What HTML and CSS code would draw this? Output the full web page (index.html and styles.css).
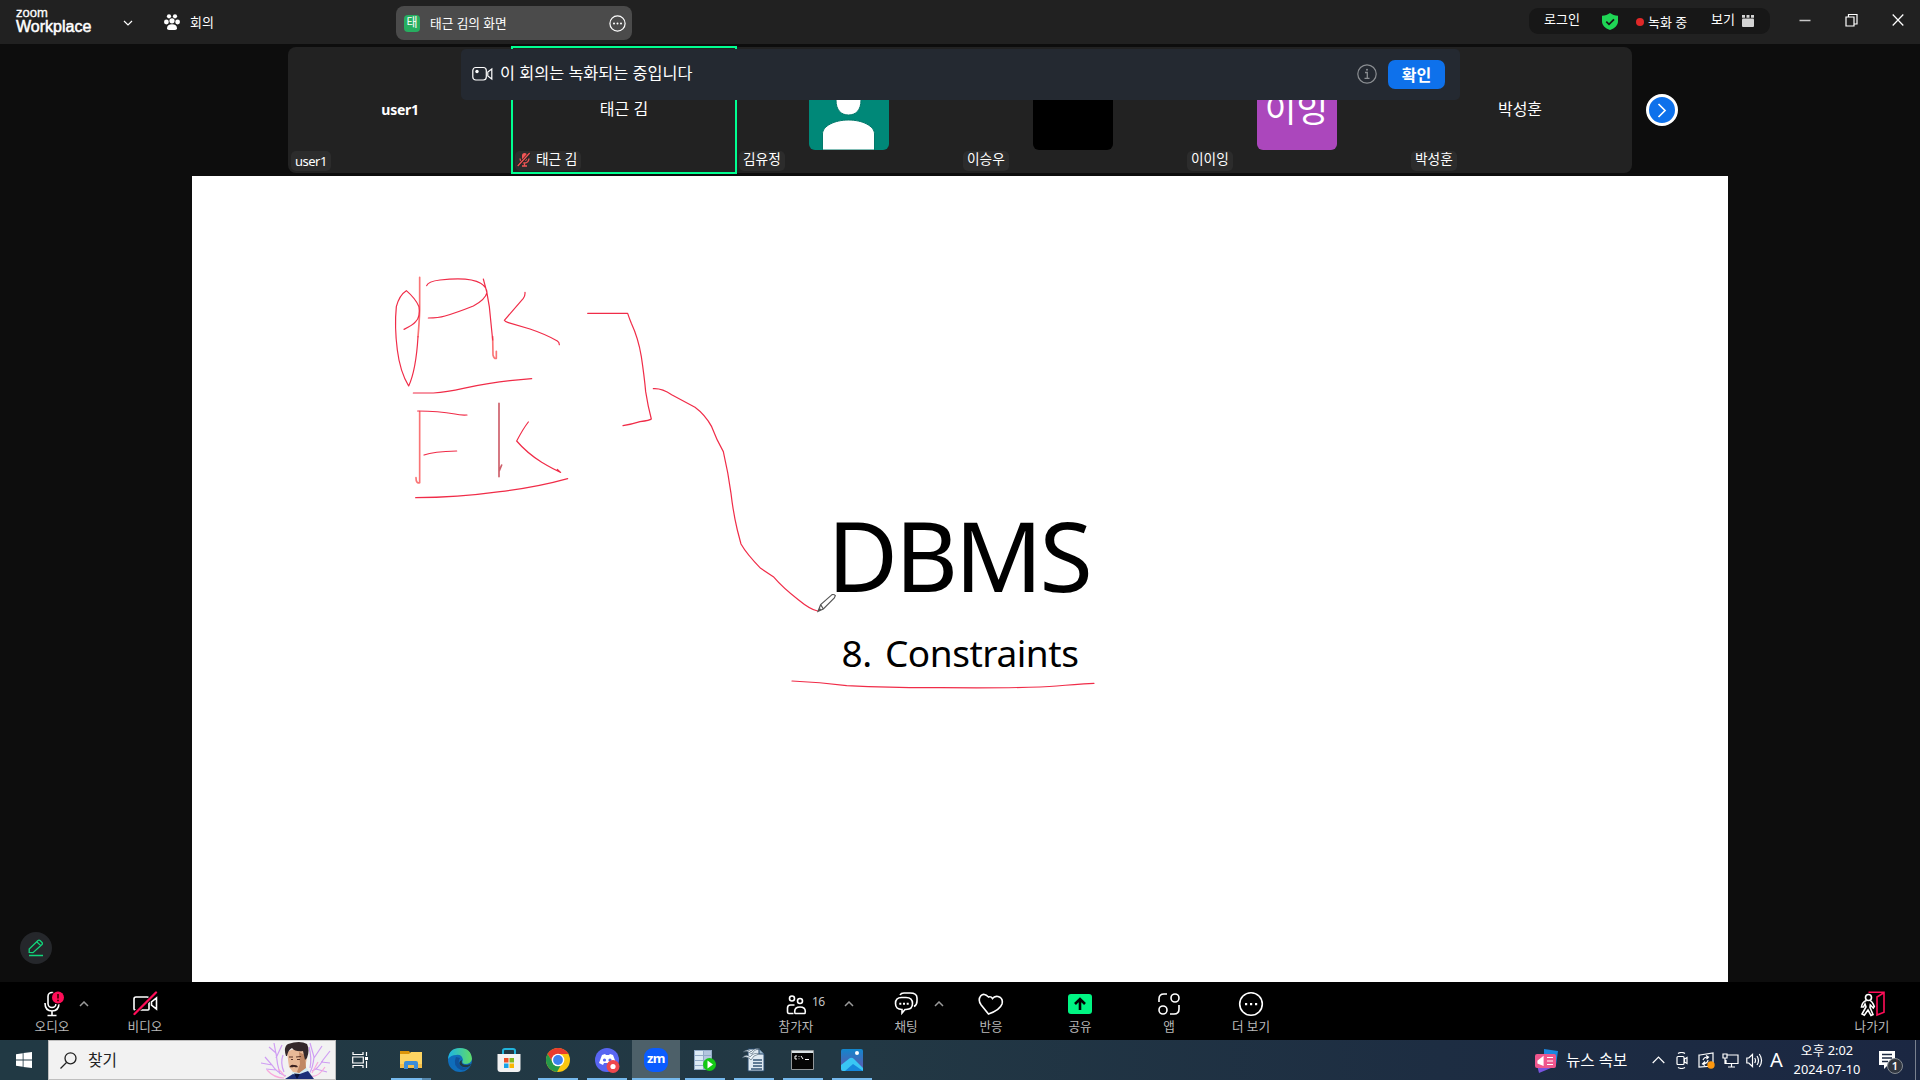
FILE: index.html
```
<!DOCTYPE html>
<html lang="ko">
<head>
<meta charset="utf-8">
<title>Zoom Workplace</title>
<link rel="stylesheet" href="styles.css">
</head>
<body>
<div class="screen">
  <header class="topbar">
    <div class="brand"><span class="brand-zoom">zoom</span><span class="brand-work">Workplace</span></div>
    <svg class="brand-caret" width="10" height="6" viewBox="0 0 10 6"><path d="M1 1l4 4 4-4" class="ln"/></svg>
    <svg class="meet-icon" width="16" height="16" viewBox="0 0 16 16" fill="#fff"><circle cx="5" cy="2.3" r="2.1"/><circle cx="11" cy="2.3" r="2.1"/><circle cx="2.4" cy="8" r="2.4"/><circle cx="13.6" cy="8" r="2.4"/><circle cx="8" cy="6.8" r="2.6"/><path d="M3 14.2c0-2.6 2-4 5-4s5 1.400 5 4q0 1.800-2 1.800H5q-2 0-2-1.800z"/></svg>
    <span class="meet-text">회의</span>
    <div class="tab">
      <span class="tab-badge">태</span><span class="tab-name">태근 김의 화면</span>
      <svg width="17" height="17" viewBox="0 0 17 17"><circle cx="8.500" cy="8.500" r="7.600" class="ln"/><g fill="#fff"><circle cx="5" cy="8.500" r="1"/><circle cx="8.500" cy="8.500" r="1"/><circle cx="12" cy="8.500" r="1"/></g></svg>
    </div>
    <div class="status">
      <span class="login">로그인</span>
      <svg class="shield" width="16" height="17" viewBox="0 0 16 17"><path d="M8 0c2 1.700 5 2.600 8 2.700v5.500c0 4-3 7-8 8.800-5-1.800-8-4.800-8-8.800V2.700C3 2.600 6 1.700 8 0z" fill="#1fd655"/><path d="M4.300 8.700l2.700 2.600 5-5" fill="none" stroke="#171717" stroke-width="1.800"/></svg>
      <span class="rec-dot"></span><span class="rec">녹화 중</span>
      <span class="view">보기</span>
      <svg class="view-icon" width="12" height="12" viewBox="0 0 12 12" fill="#d4d4d4"><path d="M0 0h3v2.700H0zM4.500 0h3v2.700h-3zM9 0h3v2.700H9z"/><rect y="3.600" width="12" height="8.400" rx="1"/></svg>
    </div>
    <div class="winctl">
      <svg width="12" height="14" viewBox="0 0 12 14"><path d="M.5 7.500h11" stroke="#c8c8c8" stroke-width="1.500"/></svg>
      <svg width="13" height="14" viewBox="0 0 13 14"><path d="M1 4h8v9H1zM3.500 4V1.500H12V11H9" class="ln"/></svg>
      <svg width="12" height="14" viewBox="0 0 12 14"><path d="M.7 1.500l10.600 11M11.300 1.500L.7 12.500" class="ln"/></svg>
    </div>
  </header>

  <main class="stage">
    <div class="gallery">
      <div class="tile"><b class="who latin">user1</b><span class="tag latin-tag">user1</span></div>
      <div class="tile active"><span class="who">태근 김</span><span class="tag"><svg width="14" height="15" viewBox="0 0 14 15"><rect x="5" y="1" width="5" height="8" rx="2.500" fill="#f25555"/><path d="M3 6.500q.5 4.500 4.500 4.500T12 6.500M7.500 11v3M5 14h5" fill="none" stroke="#f25555" stroke-width="1.300"/><path d="M1 14L13 1" stroke="#222" stroke-width="3"/><path d="M.7 14L12.700 1" stroke="#f25555" stroke-width="1.300"/></svg>태근 김</span></div>
      <div class="tile"><div class="avatar teal"><svg width="80" height="80" viewBox="0 0 80 80"><path d="M27 30c0-10 5-15 12.500-15S52 20 52 30s-5 15-12.500 15S27 40 27 30z" fill="#fff" stroke="#03796b"/><path d="M13.500 80V64c0-8 12-14 26-14s26 6 26 14v16z" fill="#fff" stroke="#03796b"/></svg></div><span class="tag">김유정</span></div>
      <div class="tile"><div class="avatar black"></div><span class="tag">이승우</span></div>
      <div class="tile"><div class="avatar purple">이잉</div><span class="tag">이이잉</span></div>
      <div class="tile"><span class="who">박성훈</span><span class="tag">박성훈</span></div>
    </div>
    <div class="next"><svg width="10" height="15" viewBox="0 0 10 15"><path d="M1.500 1l6.500 6.500L1.500 14" fill="none" stroke="#fff" stroke-width="1.700"/></svg></div>
    <div class="banner">
      <svg width="21" height="16" viewBox="0 0 21 16"><rect x=".8" y="1.500" width="13.500" height="12.500" rx="3" class="ln"/><circle cx="5" cy="5.500" r="1.700" fill="#fff"/><path d="M19.800 3v10l-4-3V6z" class="ln"/></svg>
      <span class="banner-text">이 회의는 녹화되는 중입니다</span>
      <svg width="20" height="20" viewBox="0 0 20 20"><circle cx="10" cy="10" r="9.200" fill="none" stroke="#8b8e92" stroke-width="1.200"/><path d="M8 8.500h2.300V14M7.500 14.300h5" fill="none" stroke="#8b8e92" stroke-width="1.300"/><circle cx="10" cy="5.700" r="1" fill="#8b8e92"/></svg>
      <button class="ok">확인</button>
    </div>

    <section class="slide">
      <h1>DBMS</h1>
      <h2>8. Constraints</h2>
      <svg class="ink" width="1536" height="806" viewBox="0 0 1536 806">
        <g transform="translate(178 84) scale(.33333)">
          <g fill="none" stroke="#f02c48" stroke-width="3.600" stroke-linecap="round" stroke-linejoin="round">
            <path stroke="#fa7576" stroke-width="5" d="M149 52V150Q148 185 144 230M149 455V668Q138 672 138 653M368 230L369 285Q372 297 379 295V274"/>
            <path d="M144 230Q138 330 116 378Q90 335 82 270Q73 200 79 140Q88 105 109 92Q136 115 147 140Q152 170 137 185Q128 196 102 208"/>
            <path d="M170 77Q174 64 210 60C270 53 308 55 332 70Q349 80 351 98Q345 120 310 138Q260 158 225 168Q205 174 175 174M340 57Q352 95 358 140L368 240"/>
            <path d="M465 97Q466 107 460 115L403 181Q405 185 415 188L480 207Q530 224 562 243Q568 247 568 254M130 399H190Q230 396 280 385Q360 368 420 362L485 356"/>
            <path d="M143 453Q205 453 255 462Q270 466 291 465M162 585Q190 575 260 573M475 486Q460 505 440 543Q470 578 515 607Q550 628 572 637L562 628M137 713Q260 713 390 695Q500 682 593 656"/>
            <path stroke="#cd5f6a" stroke-width="5" d="M387 430V650M388 632L395 615"/>
            <path d="M653 160H773Q778 175 784 190Q805 235 814 290Q823 350 827 395Q834 440 844 477Q840 481 810 485Q785 493 759 497"/>
            <path d="M850 386Q875 384 905 404L975 442Q1005 464 1025 500Q1040 540 1060 575Q1075 640 1083 700Q1090 760 1102 810L1113 852Q1130 882 1172 925L1210 950Q1240 985 1285 1019Q1320 1048 1343 1053"/>
            <path d="M1266 1263Q1350 1267 1430 1277Q1580 1284 1710 1283Q1980 1285 2060 1278Q2110 1273 2172 1270"/>
          </g>
          <path d="M1344 1054L1352 1034 1386 1004Q1392 1002 1396 1007L1393 1014 1360 1047ZM1352 1034L1360 1047" fill="#fff" stroke="#555" stroke-width="3.500"/><path d="M1344 1054l5-11 5 6z" fill="#555"/>
        </g>
      </svg>
    </section>
    <div class="annotate"><svg width="16" height="18" viewBox="0 0 16 18"><path d="M1.200 13.500V10L10 1.500q1-.8 2 0l2 2q.8 1 0 2L5 13.700zM9 3l3.800 3.600M1 16.500h14" fill="none" stroke="#12d67b" stroke-width="1.300"/></svg></div>
  </main>

  <nav class="controls">
    <div class="left-group">
      <div class="ctl"><svg width="26" height="26" viewBox="0 0 26 26"><g class="ln tk"><rect x="9" y="1.500" width="8" height="15" rx="4"/><path d="M6 12q0 8 7 8t7-8M13 20v4M8.500 24.500h9"/></g><circle cx="19" cy="6.500" r="7" fill="#000"/><circle cx="19" cy="6.500" r="6" fill="#ff0d58"/><path d="M19 3v4.500M19 8.700v1.600" stroke="#400" stroke-width="1.700"/></svg><span>오디오</span></div>
      <svg class="caret" width="10" height="6" viewBox="0 0 10 6"><path d="M1 5l4-4 4 4"/></svg>
      <div class="ctl video"><svg width="26" height="26" viewBox="0 0 26 26"><path d="M4 6h11q2 0 2 2v10q0 1-1 1H3q-1 0-1-1V8q0-2 2-2zM24.500 7v11l-5-4v-3z" class="ln tk"/><path d="M2.500 22.500L24 2" stroke="#000" stroke-width="4"/><path d="M2.500 23L24 1.500" stroke="#ff0d58" stroke-width="2.300" stroke-linecap="round"/></svg><span>비디오</span></div>
    </div>
    <div class="mid-group">
      <div class="ctl"><svg width="26" height="24" viewBox="0 0 26 24"><g class="ln tk"><circle cx="9" cy="6.500" r="2.500"/><circle cx="17" cy="9" r="2.500"/><path d="M10.500 21.500H6q-1.500 0-1.500-2V16q0-3 3-3h4M12.500 21.500q-.8 0-.8-2 0-4.500 5.300-4.500t5.300 4.500q0 2-.8 2z"/></g></svg><span>참가자</span><i class="count">16</i></div>
      <svg class="caret c1" width="10" height="6" viewBox="0 0 10 6"><path d="M1 5l4-4 4 4"/></svg>
      <div class="ctl chat"><svg width="24" height="24" viewBox="0 0 24 24"><path d="M6 3Q7 1 10 1h6q7 0 7 5v3q0 4-3 5.500M9 5.500h3q6.500 0 6.500 6t-6.500 6h-1L8 21v-3.500q-6.500 0-6.500-6t6-6z" class="ln tk"/><path d="M5.300 10.700h2v2h-2zm3.700 0h2v2H9zm3.700 0h2v2h-2z" fill="#fff"/></svg><span>채팅</span></div>
      <svg class="caret c2" width="10" height="6" viewBox="0 0 10 6"><path d="M1 5l4-4 4 4"/></svg>
      <div class="ctl heart"><svg width="26" height="24" viewBox="0 0 26 24"><path d="M10.500 5Q6 .5 2.800 3.800-.5 8 3.200 13L10.500 22Q22 18 24 12 25.500 6 20 4.500q-3.500-.8-5.500 2Q13 4 10.500 5z" class="ln tk"/></svg><span>반응</span></div>
      <div class="ctl share"><svg width="24" height="24" viewBox="0 0 24 24"><rect y="2" width="24" height="20" rx="3" fill="#00f583"/><path d="M12 18V8M7 12l5-5 5 5" fill="none" stroke="#000" stroke-width="2.600"/></svg><span>공유</span></div>
      <div class="ctl apps"><svg width="24" height="24" viewBox="0 0 24 24"><g class="ln tk"><circle cx="18" cy="6" r="4"/><circle cx="6" cy="18" r="4"/><path d="M2 10V7q0-5 5-5h3M22 13v4q0 5-5 5h-4"/></g></svg><span>앱</span></div>
      <div class="ctl more"><svg width="26" height="26" viewBox="0 0 26 26"><circle cx="13" cy="13" r="11.300" class="ln tk"/><path d="M7 12h2.200v2.200H7zm5 0h2.200v2.200H12zm5 0h2.200v2.200H17z" fill="#fff"/></svg><span>더 보기</span></div>
    </div>
    <div class="ctl leave"><svg width="26" height="26" viewBox="0 0 26 26"><g class="ln tk"><circle cx="9.500" cy="6.500" r="3"/><path d="M7.500 9.500Q3 11 2.500 16h2l1.500-3 1 3-4 7 2.300 1.300L9 19l3 5.500 2-1-3-7 .3-2.500 3 3 1-1.500Q13 10 11 9.500"/></g><path d="M9.500 1.300H25v20L18 24V6l6.500-4" fill="none" stroke="#ff0d58" stroke-width="1.600"/></svg><span>나가기</span></div>
  </nav>

  <footer class="taskbar">
    <div class="start"><svg width="16" height="16" viewBox="0 0 16 16" fill="#fff"><path d="M0 2.200L6.700 1.300V7.500H0zM7.500 1.100L16 0v7.500H7.500zM0 8.400h6.700v6.300L0 13.800zM7.500 8.400H16V16l-8.500-1.100z"/></svg></div>
    <div class="search">
      <svg width="17" height="17" viewBox="0 0 17 17"><circle cx="10.500" cy="6.300" r="5.500" fill="none" stroke="#222" stroke-width="1.300"/><path d="M6.500 10.500L.5 16.500" stroke="#222" stroke-width="1.300"/></svg>
      <span>찾기</span>
      <svg class="portrait" width="72" height="38" viewBox="0 0 72 38">
        <g fill="none" stroke="#cf9df3" stroke-width="1.200"><path d="M26 35Q17 32 12 24L5 16M12 24L1 22M16 29L6 28M20 33Q17 23 16 12L9 6M16 17L22 4M16 13L14 2M24 31Q20 22 23 14M49 33Q53 27 54 16L50 2M54 17l8-12M52 30Q58 28 63 19L70 10M61 21l9 1M56 28l11 3M50 27Q52 17 49 6"/></g>
        <path d="M24 37Q14 37 7 29M25 36Q21 30 18 28M50 35Q58 37 65 26M52 32l6-11" fill="none" stroke="#f9a9dc" stroke-width="1.200"/>
        <path d="M30 36l3-6 13-4 5 7z" fill="#d4ecf4"/>
        <path d="M27 11Q34 6 44 9L47 17 45 27 39 32 33 31 29 26z" fill="#e8b997"/>
        <path d="M39 11l6 3 1 13-7 5-2-1 3-8z" fill="#c08764"/>
        <path d="M26 15Q23 6 28 3 40-1 47 3 50 9 47 17L45 19 43 10Q35 11 32 7 28 9 27 15z" fill="#33282a"/>
        <path d="M29 16h4M36 16l5-.5M31 18.500h2M37 18.500h3" fill="none" stroke="#5a3529" stroke-width="1.200"/>
        <path d="M29.500 26q1.500-3 4.500-2 3-.5 4 2-2 .8-4-.3-2 1-4.500.3z" fill="#3a211f"/>
        <path d="M25 38l8-5 4 1 11-4 6 8z" fill="#1c2f78"/><path d="M34 32.500l3 5.500 3-5z" fill="#0b1238"/>
      </svg>
    </div>
    <div class="apps-row">
      <div class="app tv"><svg width="17" height="16" viewBox="0 0 17 16"><path d="M1 0v2.500h10V0M1 16v-2.500h10V16M.7 5h10.600v6H.7zM14.500 0v4M14.500 9v7" fill="none" stroke="#fff" stroke-width="1.200"/><path d="M13 5h3v3h-3z" fill="#fff"/></svg></div>
      <div class="app on multi"><svg width="22" height="20" viewBox="0 0 22 20"><path d="M0 1h9l2 3H0z" fill="#dc9509"/><path d="M0 4h9l2-2h11v16H0z" fill="#fdd462"/><path d="M0 14h22v4H0z" fill="#f3bd48"/><path d="M4 19v-6q0-2 2-2h10q2 0 2 2v6h-4v-4H8v4z" fill="#3b8dd8"/></svg></div>
      <div class="app"><svg width="24" height="24" viewBox="0 0 24 24"><defs><linearGradient id="eg"><stop stop-color="#1bb4e6"/><stop offset="1" stop-color="#61dc66"/></linearGradient></defs><circle cx="12" cy="12" r="12" fill="#0f6dbb"/><path d="M0 11Q1 0 12 0t12 11q-1 5-7 5-4-1-2-4Q14 6 8 7q-5 0-8 4z" fill="url(#eg)"/><path d="M8 9q-4 9 5 13 5 1 9-4-5 3-9 0-4-3-1-8z" fill="#10529b"/><path d="M14 12q-2 5 5 5l4-1-1 2q-6 3-10-1-2-3 2-5z" fill="#213843"/></svg></div>
      <div class="app"><svg width="24" height="24" viewBox="0 0 24 24"><path d="M6 7V2.500Q6 1 8 1h8q2 0 2 1.500V7" fill="none" stroke="#21b4dc" stroke-width="2"/><path d="M.5 6h23v15q0 3-3 3h-17q-3 0-3-3z" fill="#f2f2f2"/><path d="M7 10h4.500v4.500H7z" fill="#ee5029"/><path d="M12.500 10H17v4.500h-4.500z" fill="#82b91c"/><path d="M7 15.500h4.500V20H7z" fill="#17a2e9"/><path d="M12.500 15.500H17V20h-4.500z" fill="#f9b600"/></svg></div>
      <div class="app on"><svg width="24" height="24" viewBox="0 0 24 24"><circle cx="12" cy="12" r="12" fill="#fbc711"/><path d="M1.600 6A12 12 0 0 1 22.400 6H12l-5 9z" fill="#e83b2e"/><path d="M1.600 6A12 12 0 0 0 11 24l5-9-9-.3z" fill="#26984a"/><circle cx="12" cy="12" r="6.300" fill="#fff"/><circle cx="12" cy="12" r="4.900" fill="#3c82ee"/></svg></div>
      <div class="app on"><svg width="25" height="25" viewBox="0 0 25 25"><circle cx="12" cy="12" r="12" fill="#5865f2"/><path d="M7 7l3-1 1 1h3l1-1 3 1 3 8-4 2-1-2H9l-1 2-4-2z" fill="#fff"/><circle cx="9.500" cy="12" r="1.600" fill="#5865f2"/><circle cx="15" cy="12" r="1.600" fill="#5865f2"/><circle cx="18" cy="18.500" r="6.500" fill="#ee474d"/><circle cx="18" cy="18.500" r="2.600" fill="#fff"/></svg></div>
      <div class="app on current"><span class="zm">zm</span></div>
      <div class="app on"><svg width="22" height="22" viewBox="0 0 22 22"><path d="M0 1h18v20H0z" fill="#92aac8"/><path d="M1 2h8v4H1zM1 7h8v4H1zM1 12h8v4H1zM1 17h8v3H1z" fill="#dceaf5"/><path d="M10 2h7v4h-7zM10 7h7v4h-7zM10 12h7v4h-7z" fill="#b3c6df"/><circle cx="15.500" cy="15.500" r="6.500" fill="#14c815"/><path d="M13.500 11.500v8l5.500-4z" fill="#fff"/></svg></div>
      <div class="app on"><svg width="24" height="24" viewBox="0 0 24 24"><path d="M6 1h11l5 5v17H6z" fill="#dfeaf2" stroke="#27496b"/><path d="M17 1v5h5" fill="#9db8cc" stroke="#27496b"/><path d="M11 12h9M11 15h9M11 18h9M9 21h11" stroke="#365777" stroke-width="1.400"/><path d="M1 4q5-4 8 0 4-5 9-3-6 0-8 5-4-4-9-2zM0 10q4-5 8-1 4-5 9-3-6 1-8 6-4-5-9-2z" fill="#eef6fa" stroke="#42586a" stroke-width=".6"/></svg></div>
      <div class="app on cmd"><svg width="23" height="20" viewBox="0 0 23 20"><path d="M.5.5h22v19H.5z" fill="#050505" stroke="#92979a"/><path d="M1 1h21v2H1z" fill="#dae2e5"/><path d="M6 6H4v3h2M8 6v.8M8 8.500v.7M10 6l2 3M14 9.500h4" fill="none" stroke="#fff"/></svg></div>
      <div class="app on"><svg width="22" height="24" viewBox="0 0 22 24"><defs><linearGradient id="pg" x2="0" y2="1"><stop stop-color="#1287cd"/><stop offset="1" stop-color="#6752aa"/></linearGradient></defs><rect y="1" width="22" height="22" rx="2" fill="url(#pg)"/><path d="M0 17l9-7q2-1 4 1l9 9v3H2q-2 0-2-2z" fill="#39c6f4"/><path d="M4 23l8-7 10 7z" fill="#1687db"/><circle cx="16" cy="5" r="2" fill="#fff"/></svg></div>
    </div>
    <div class="tray">
      <svg class="news" width="24" height="25" viewBox="0 0 24 25"><path d="M10 1l14 2-2 14-12-2z" fill="#1b86df"/><path d="M3 17l14 3-12 5z" fill="#7954df"/><rect x="1" y="6" width="21" height="14" rx="2" fill="#ee568d"/><path d="M4 13l5-4v8l-5-2zM13 9.500h6M13 13h6M13 16.500h6" fill="#fff" stroke="#fff" stroke-width="1.200"/></svg>
      <span class="news-text">뉴스 속보</span>
      <svg class="t-caret" width="13" height="8" viewBox="0 0 13 8"><path d="M.7 7l5.800-6 5.800 6" class="ln"/></svg>
      <svg class="t-meet" width="12" height="17" viewBox="0 0 12 17"><path d="M2 1.500Q5.500-.5 9 1.500M2 15.500q3.500 2 7 0M2 4.500h5q1 0 1 1v6q0 1-1 1H2q-1 0-1-1v-6q0-1 1-1zM11 5.500v6L8.500 10V7z" class="ln"/></svg>
      <svg class="t-sync" width="17" height="17" viewBox="0 0 17 17"><path d="M2 3l13-2v13L1 15V3zM5 8q1-3 5-3M8 3.500L10.500 5 8.500 7M10 8q0 3-5 4M7 9.500L4.500 12 7 13.500" class="ln"/><circle cx="13" cy="13" r="3.700" fill="#ff980e"/></svg>
      <svg class="t-net" width="17" height="15" viewBox="0 0 17 15"><path d="M5 2h11v8.500H4V7M9.500 10.500V14M6 14h7M1 1h4v4H1zM3 5v6" class="ln"/></svg>
      <svg class="t-vol" width="17" height="15" viewBox="0 0 17 15"><path d="M.8 5h2L6.500 1.500v12L2.800 10h-2zM8.700 5q1.600 2.500 0 5M11 3q3 4.500 0 9M13.300 1q4.500 6.500 0 13" class="ln"/></svg>
      <span class="ime">A</span>
      <div class="clock"><span>오후 2:02</span><span>2024-07-10</span></div>
      <div class="notify"><svg width="16" height="18" viewBox="0 0 16 18"><path d="M0 0h16v14H9l-4 4v-4H0z" fill="#fff"/><path d="M3 3.500h10M3 7h10M3 10.500h6" stroke="#1c2941" stroke-width="1.300"/></svg><i>1</i></div>
      <div class="desk"></div>
    </div>
  </footer>
</div>
</body>
</html>
```
FILE: styles.css
```
* { box-sizing: border-box; }
body { margin: 0; background: #0d0d0d; color: #fff; font-family: "Noto Sans", "Noto Sans CJK KR", sans-serif; overflow: hidden; }
svg { display: block; flex: none; }
i { font-style: normal; }
span, b { white-space: nowrap; }
.ln { fill: none; stroke: #fff; stroke-width: 1.2; }
.tk { stroke-width: 1.6; }
.screen { width: 1920px; height: 1080px; display: grid; grid-template-rows: 44px 938px 58px 40px; }

.topbar { display: flex; align-items: center; background: #212121; padding-left: 16px; font-size: 13px; line-height: 16px; }
.brand { width: 107px; display: flex; flex-direction: column; font-family: "Liberation Sans", sans-serif; padding-bottom: 2px; }
.brand-zoom { font-size: 13px; line-height: 10px; font-weight: 500; -webkit-text-stroke: .3px #fff; }
.brand-work { font-size: 16px; line-height: 17px; -webkit-text-stroke: .5px #fff; }
.brand-caret { margin-top: 1px; }
.meet-icon { margin-left: 31px; }
.meet-text { margin-left: 10px; width: 206px; }
.tab { width: 236px; height: 34px; margin-top: 2px; padding: 0 6px 0 8px; background: #4b4b4b; border-radius: 8px; display: flex; align-items: center; font-size: 12.7px; }
.tab-badge { width: 16px; height: 17px; background: #27ae60; border-radius: 4px; text-align: center; line-height: 15px; font-size: 12px; }
.tab-name { flex: 1; margin-left: 10px; }
.status { width: 241px; height: 26px; margin-left: 897px; margin-bottom: 2px; padding-left: 15px; background: #171717; border-radius: 9px; display: flex; align-items: center; }
.login { width: 58px; padding-bottom: 4px; }
.rec-dot { width: 8px; height: 8px; margin: 2px 4px 0 18px; border-radius: 50%; background: #e02828; }
.rec { width: 63px; padding-top: 1px; }
.view { width: 31px; padding-bottom: 4px; }
.winctl { margin-left: 29px; display: flex; gap: 34px; padding-bottom: 4px; }

.stage { position: relative; display: flex; flex-direction: column; align-items: center; }
.gallery { margin-top: 3px; width: 1344px; height: 126px; background: #222; border-radius: 8px; display: grid; grid-template-columns: repeat(6, 224px); }
.tile { position: relative; display: flex; align-items: center; justify-content: center; }
.active::after { content: ""; position: absolute; inset: -1px -1px -1px -1px; border: 2px solid #00ff91; }
.who { font-size: 16px; line-height: 20px; padding-bottom: 2px; }
.latin { font-size: 14px; padding: 0; letter-spacing: -.3px; }
.tag { position: absolute; left: 3px; bottom: 2px; height: 20px; padding: 0 4px 4px; display: flex; align-items: center; gap: 5px; background: #2c2c2c; border-radius: 5px; font-size: 13.7px; line-height: 16px; }
.active .tag { padding-left: 2px; }
.latin-tag { padding-bottom: 0; font-size: 13px; letter-spacing: -.5px; }
.avatar { width: 80px; height: 80px; margin-left: 1px; border-radius: 6px; overflow: hidden; }
.teal { background: #008878; }
.black { background: #000; }
.purple { background: #ab47bc; font-size: 34.5px; line-height: 78px; text-align: center; }
.next { position: absolute; left: 1646px; top: 50px; width: 32px; height: 32px; border-radius: 50%; border: 3px solid #fff; background: #0e71eb; display: flex; align-items: center; justify-content: center; }
.banner { position: absolute; left: 461px; top: 5px; width: 999px; height: 51px; border-radius: 5px; background: #242931; display: flex; align-items: center; padding: 0 15px 2px 11px; }
.banner-text { flex: 1; margin-left: 7px; font-size: 16.3px; line-height: 20px; padding-bottom: 1px; }
.ok { width: 57px; height: 29px; margin-left: 11px; padding: 0; border: 0; border-radius: 7px; background: #0e71eb; color: #fff; font: 700 16px/29px "Noto Sans CJK KR", sans-serif; position: relative; top: 1px; }
.slide { position: relative; margin-top: 3px; width: 1536px; height: 806px; background: #fff; color: #000; display: flex; flex-direction: column; align-items: center; padding-top: 316px; }
.slide h1 { margin: 0 3px 0 0; font-weight: 400; font-size: 97px; line-height: 124px; letter-spacing: -3.2px; }
.slide h2 { margin: 2px 0 0; font-weight: 400; font-size: 37px; line-height: 70px; letter-spacing: -.45px; word-spacing: 4px; }
.ink { position: absolute; left: 0; top: 0; }
.annotate { position: absolute; left: 20px; top: 888px; width: 32px; height: 32px; border-radius: 50%; background: #25272b; display: flex; align-items: center; justify-content: center; }

.controls { background: #000; display: grid; grid-template-columns: 744px 1fr 50px; padding: 0 23px 0 27px; }
.left-group, .mid-group { display: flex; }
.ctl { position: relative; width: 50px; display: flex; flex-direction: column; align-items: center; padding-top: 9px; }
.ctl svg { height: 26px; }
.ctl span { margin-top: 2px; font-size: 12.6px; line-height: 16px; color: #b9b9b9; }
.caret { margin: 19px 0 0 2px; fill: none; stroke: #999; stroke-width: 1.5; }
.video { margin-left: 31px; }
.count { position: absolute; left: 41px; top: 12px; font-size: 12px; line-height: 16px; color: #c4c4c4; letter-spacing: -.5px; }
.c1 { margin-left: 23px; }
.chat { margin-left: 27px; }
.c2 { margin-left: 3px; }
.heart { margin-left: 22px; }
.share, .apps { margin-left: 39px; }
.more { margin-left: 32px; }

.taskbar { display: flex; background: linear-gradient(90deg, #213944, #223844 45%, #1d2d42 75%, #1b2742); }
.start { width: 48px; display: flex; align-items: center; justify-content: center; }
.search { width: 288px; background: #f2f2f2; border: 1px solid #bfbfbf; color: #222; display: flex; align-items: center; padding-left: 11px; font-size: 15.7px; line-height: 20px; }
.search span { margin-left: 11px; padding-bottom: 1px; }
.portrait { margin-left: auto; margin-right: 3px; }
.apps-row { display: flex; gap: 1px; }
.app { position: relative; width: 48px; display: flex; align-items: center; justify-content: center; }
.tv { width: 50px; padding-right: 2px; }
.cmd { padding-right: 2px; }
.on::after { content: ""; position: absolute; left: 4px; right: 4px; bottom: 0; height: 2px; background: #76b9ed; }
.multi::after { background: linear-gradient(90deg, #76b9ed 31px, #5487ad 31px); }
.current { background: #4d6069; }
.current::after { left: 0; right: 0; }
.zm { width: 24px; height: 24px; border-radius: 9px; background: #0b5cff; font-size: 13px; font-weight: 700; line-height: 21px; text-align: center; letter-spacing: -.5px; }
.tray { margin-left: auto; display: flex; align-items: center; font-size: 15px; }
.news-text { margin-left: 8px; width: 86px; font-size: 15.6px; padding-bottom: 2px; }
.t-meet { margin-left: 11px; }
.t-sync { margin-left: 10px; }
.t-net { margin-left: 7px; }
.t-vol { margin-left: 7px; }
.ime { margin-left: 7px; width: 17px; font-size: 20px; line-height: 20px; }
.clock { width: 80px; display: flex; flex-direction: column; align-items: center; font-size: 12.8px; line-height: 19px; padding-bottom: 1px; }
.notify { position: relative; margin-left: 12px; width: 36px; }
.notify i { position: absolute; left: 8px; top: 7px; width: 16px; height: 16px; border-radius: 50%; border: 1px solid #858b92; background: #303640; font-size: 11px; line-height: 14px; text-align: center; font-weight: 600; }
.desk { width: 5px; height: 40px; border-left: 1px solid #79818f; }
```
